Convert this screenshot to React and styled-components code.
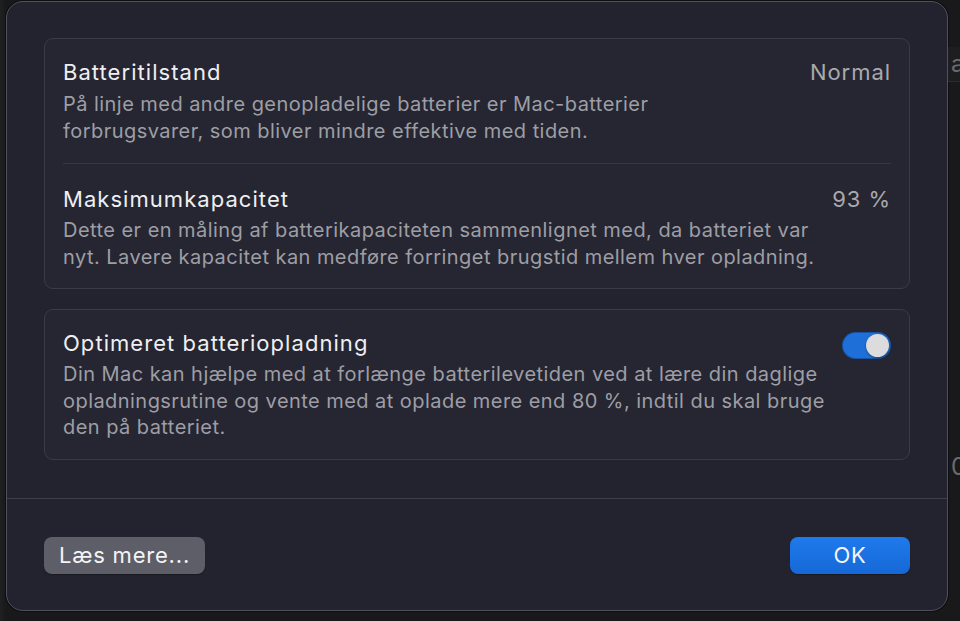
import React, { useState } from 'react';
import styled, { createGlobalStyle } from 'styled-components';

const GlobalStyle = createGlobalStyle`
    html, body {
        margin: 0;
        padding: 0;
        background: #19191c;
    }
    body {
        font-family: Inter, "Noto Sans", "Liberation Sans", sans-serif;
        -webkit-font-smoothing: antialiased;
    }
`;

const Page = styled.div`
    width: 960px;
    height: 621px;
    display: flex;
    padding: 1px 0 0 6px;
    box-sizing: border-box;
    overflow: hidden;
    background: linear-gradient(90deg, #1f2022 0px, #19191c 6px);
`;

const Dialog = styled.div`
    width: 942px;
    height: 610px;
    box-sizing: border-box;
    flex-shrink: 0;
    background: #22232e;
    border: 1px solid #50515a;
    border-radius: 17px;
    display: flex;
    flex-direction: column;
    box-shadow: 0 0 0 1px #0e0e10;
`;

const Content = styled.div`
    padding: 36px 37px 38px;
    display: flex;
    flex-direction: column;
    gap: 20px;
`;

const Card = styled.section`
    background: #252632;
    border: 1px solid #3a3b46;
    border-radius: 9px;
    padding: 0 18px;
`;

const Row = styled.div`
    padding: ${p => p.$top || 20}px 0 ${p => p.$bottom || 18}px;
    border-top: ${p => (p.$divided ? '1px solid #363743' : 'none')};
`;

const RowHead = styled.div`
    display: flex;
    align-items: center;
    justify-content: space-between;
    height: 26px;
`;

const Title = styled.h3`
    margin: 0;
    font-size: 22px;
    font-weight: 400;
    line-height: 26px;
    color: #efeff1;
    letter-spacing: 1.05px;
`;

const Value = styled.span`
    font-size: 22px;
    line-height: 26px;
    color: #a9a9ae;
    letter-spacing: 0.95px;
`;

const Desc = styled.p`
    margin: ${p => p.$gap || 6}px 0 0;
    font-size: 20px;
    line-height: 26.5px;
    letter-spacing: 0.45px;
    color: #9e9ea4;
    max-width: ${p => p.$max || 780}px;
`;

const Switch = styled.button`
    width: 49px;
    height: 27px;
    border-radius: 14px;
    border: none;
    padding: 2px;
    margin-top: 4px;
    display: flex;
    justify-content: ${p => (p.$on ? 'flex-end' : 'flex-start')};
    background: ${p => (p.$on ? '#1f6fd8' : '#4a4b54')};
    box-shadow: inset 0 0 0 1px rgba(0, 0, 0, 0.25);
    cursor: pointer;
`;

const Knob = styled.span`
    width: 23px;
    height: 23px;
    border-radius: 50%;
    background: #dcdcde;
    box-shadow: 0 1px 2px rgba(0, 0, 0, 0.4);
`;

const Divider = styled.div`
    height: 1px;
    background: #3d3e49;
`;

const Footer = styled.div`
    flex: 1;
    display: flex;
    align-items: flex-start;
    justify-content: space-between;
    padding: 38px 37px 0;
`;

const Button = styled.button`
    height: 37px;
    min-width: ${p => p.$width}px;
    border: none;
    border-radius: 8px;
    font-family: inherit;
    font-size: 22px;
    letter-spacing: 0.8px;
    line-height: 37px;
    padding: 0 12px;
    color: #f4f4f6;
    background: ${p => (p.$primary ? 'linear-gradient(#1f7aeb, #1668d6)' : '#5d5e68')};
    box-shadow: 0 1px 1px rgba(0, 0, 0, 0.3);
    cursor: pointer;
`;

const Backdrop = styled.div`
    flex: 1;
    display: flex;
    flex-direction: column;
    overflow: hidden;
    color: #6b6b70;
    font-size: 24px;
`;

const Band = styled.div`
    height: ${p => p.$h}px;
    margin-top: ${p => p.$top}px;
    border-bottom: ${p => (p.$line ? '1px solid #2c2c30' : 'none')};
    background: ${p => p.$bg || 'transparent'};
    padding-left: 3px;
    line-height: ${p => p.$h}px;
    white-space: nowrap;
`;

export default function App() {
    const [optimized, setOptimized] = useState(true);

    return (
        <>
            <GlobalStyle />
            <Page>
                <Dialog>
                    <Content>
                        <Card>
                            <Row $top={20} $bottom={19}>
                                <RowHead>
                                    <Title>Batteritilstand</Title>
                                    <Value>Normal</Value>
                                </RowHead>
                                <Desc $gap={6} $max={680}>
                                    På linje med andre genopladelige batterier er Mac-batterier forbrugsvarer, som bliver mindre effektive med tiden.
                                </Desc>
                            </Row>
                            <Row $divided $top={22} $bottom={18}>
                                <RowHead>
                                    <Title>Maksimumkapacitet</Title>
                                    <Value>93 %</Value>
                                </RowHead>
                                <Desc $gap={5} $max={780}>
                                    Dette er en måling af batterikapaciteten sammenlignet med, da batteriet var nyt. Lavere kapacitet kan medføre forringet brugstid mellem hver opladning.
                                </Desc>
                            </Row>
                        </Card>
                        <Card>
                            <Row $top={20} $bottom={18}>
                                <RowHead>
                                    <Title>Optimeret batteriopladning</Title>
                                    <Switch $on={optimized} onClick={() => setOptimized(!optimized)}>
                                        <Knob />
                                    </Switch>
                                </RowHead>
                                <Desc $gap={5} $max={775}>
                                    Din Mac kan hjælpe med at forlænge batterilevetiden ved at lære din daglige opladningsrutine og vente med at oplade mere end 80 %, indtil du skal bruge den på batteriet.
                                </Desc>
                            </Row>
                        </Card>
                    </Content>
                    <Divider />
                    <Footer>
                        <Button $width={161}>Læs mere...</Button>
                        <Button $primary $width={120}>OK</Button>
                    </Footer>
                </Dialog>
                <Backdrop>
                    <Band $top={46} $h={34} $line $bg="#1e1e21">a</Band>
                    <Band $top={370} $h={30}>0</Band>
                </Backdrop>
            </Page>
        </>
    );
}
